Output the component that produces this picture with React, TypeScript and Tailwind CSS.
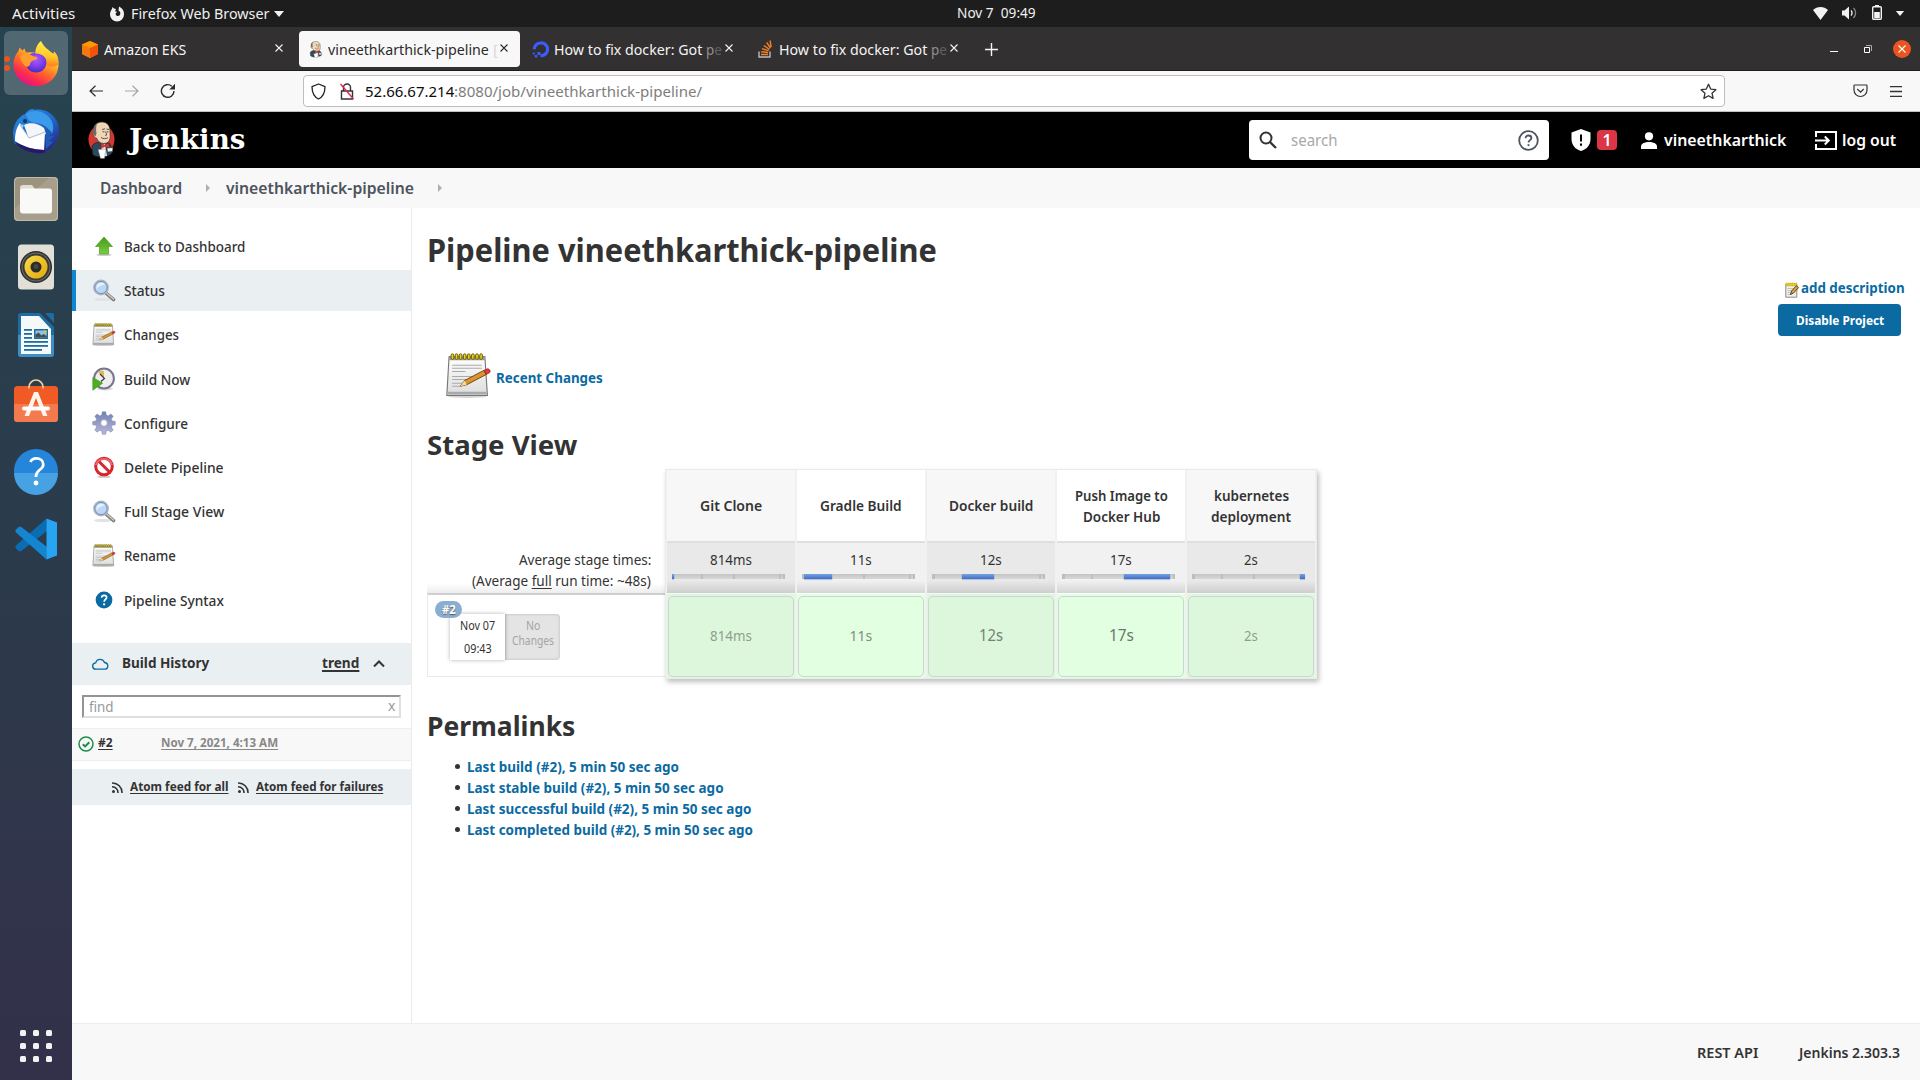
import React, { useLayoutEffect, useRef, useState } from "react";

type FitProps = { className?: string; children: React.ReactNode };

/** One line of text, condensed or widened to fill the width of its box. */
function Fit({ className = "", children }: FitProps) {
  const outer = useRef<HTMLSpanElement>(null);
  const inner = useRef<HTMLSpanElement>(null);
  const [scale, setScale] = useState(1);
  useLayoutEffect(() => {
    if (outer.current && inner.current) {
      const natural = inner.current.offsetWidth;
      if (natural > 0) setScale(outer.current.clientWidth / natural);
    }
  }, []);
  return (
    <span ref={outer} className={"inline-block shrink-0 whitespace-pre text-left " + className}>
      <span
        ref={inner}
        className="inline-block origin-left [text-decoration:inherit] [text-underline-offset:inherit]"
        style={{ transform: `scaleX(${scale})` }}
      >
        {children}
      </span>
    </span>
  );
}

/* ---------- dock icons ---------- */

function FirefoxIcon() {
  return (
    <svg className="h-12 w-12" viewBox="0 0 48 48">
      <defs>
        <linearGradient id="ffa" x1="0.85" y1="0.05" x2="0.25" y2="0.95">
          <stop offset="0" stopColor="#fff44f" />
          <stop offset="0.3" stopColor="#ffb22c" />
          <stop offset="0.55" stopColor="#ff6a2a" />
          <stop offset="0.8" stopColor="#fb2a50" />
          <stop offset="1" stopColor="#e31587" />
        </linearGradient>
        <radialGradient id="ffb" cx="0.5" cy="0.35" r="0.65">
          <stop offset="0" stopColor="#a95bff" />
          <stop offset="0.6" stopColor="#7a3bea" />
          <stop offset="1" stopColor="#4a2cba" />
        </radialGradient>
        <linearGradient id="ffc" x1="0.7" y1="0" x2="0.6" y2="1">
          <stop offset="0" stopColor="#fff44f" />
          <stop offset="0.6" stopColor="#ffc72b" />
          <stop offset="1" stopColor="#ff7a1f" />
        </linearGradient>
      </defs>
      <path
        d="M24 47C11 47 1.500 37.500 1.500 25.500 1.500 19 4 15 6.500 12L7.500 8.500 10.500 11.500 12.500 9.500 14 13.500C18 13 22 13 27 14L44 15C46 19 46.500 22 46.500 25.500 46.500 37.500 37 47 24 47Z"
        fill="url(#ffa)"
      />
      <path d="M24.500 13.500c5 0 10 4 10 9.500s-4 10.500-10.500 10.500S14 29 14 23.500s4-10 10.500-10z" fill="url(#ffb)" />
      <path
        d="M29 2c-4 3.500-6 8-5.500 12.500 8 0 12 5 11.500 12 5 2 11 1 11.300-2C47 19 44.500 14.500 42 12.500l-.7 2.500C37 11 32 8.500 29 2z"
        fill="url(#ffc)"
      />
      <path
        d="M7.500 17c4-3 9-2.500 12.500-.5 2 1.200 5.500 1 5.500 2.500 0 1.800-5 2-6.500 4-1.500 2.200-.5 3.500-3 4.500-3 1-6.500-4-8.500-10.500z"
        fill="#ff9e2c"
      />
    </svg>
  );
}

function ThunderbirdIcon() {
  return (
    <svg className="mt-[2px] h-12 w-12" viewBox="0 0 48 48">
      <defs>
        <linearGradient id="tba" x1="0.2" y1="0" x2="0.8" y2="1">
          <stop offset="0" stopColor="#2a8be0" />
          <stop offset="0.5" stopColor="#1f62c4" />
          <stop offset="1" stopColor="#2a1a78" />
        </linearGradient>
      </defs>
      <path
        d="M3 36C-2 24 3 10 13 6 16 1 22 0 22 2c10-2 20 3 24 14 3 10-1 20-8 25l-3 1-2 4-1-2-6 4 2-4-8 0-3-4-3 2-3-5-3 0z"
        fill="url(#tba)"
      />
      <path d="M14 6c5-5 17-4 23 3 5 6 5 12 3 17-3-6-8-10-16-11-5 0-9-3-10-9z" fill="#3a9bea" />
      <path d="M8 15l3 6 6 8 16-5-1 18C22 42 10 38 3 33 3 26 4 20 8 15z" fill="#fff" />
      <path d="M12 17c6-3 14-2 20 3l2 6-17 5z" fill="#f3f5f9" />
      <path d="M8 17l9 13 16-6" fill="none" stroke="#b7bcc6" strokeWidth="1" />
      <path d="M3 34c8 5 20 8 30 8l-1 3C20 46 8 42 3 34z" fill="#2a1668" />
      <circle cx="13" cy="13" r="2" fill="#123a66" />
      <path d="M8 16l4 1-2 4z" fill="#8fd0f5" />
      <path d="M34 22l6 2-3 4 5 0-5 5 4 1-7 7z" fill="#1e5cb8" />
    </svg>
  );
}

function FilesIcon() {
  return (
    <svg className="h-12 w-12" viewBox="0 0 48 48">
      <rect x="2" y="2" width="44" height="44" rx="4" fill="#9c937f" />
      <path d="M2 34L38 2h4a4 4 0 014 4v36a4 4 0 01-4 4H6a4 4 0 01-4-4z" fill="#a79f8b" />
      <rect x="2.500" y="2.500" width="43" height="43" rx="4" fill="none" stroke="#c3bba8" />
      <path d="M8 13a3 3 0 013-3h9l3 4h4v8H8z" fill="#e2ddcf" />
      <rect x="8" y="13.500" width="32" height="25" rx="3" fill="#f9f9f7" />
    </svg>
  );
}

function RhythmboxIcon() {
  return (
    <svg className="h-12 w-12" viewBox="0 0 48 48">
      <defs>
        <linearGradient id="rba" x1="0" y1="0" x2="1" y2="1">
          <stop offset="0" stopColor="#f9da4c" />
          <stop offset="1" stopColor="#e2a90a" />
        </linearGradient>
      </defs>
      <rect x="6" y="1.500" width="36" height="45" rx="3.500" fill="#e2dfd6" />
      <circle cx="24" cy="24" r="16" fill="#2c2f33" />
      <circle cx="24" cy="24" r="14.500" fill="#6b6b68" />
      <circle cx="24" cy="24" r="13.500" fill="#3a3a36" />
      <circle cx="24" cy="24" r="11.500" fill="url(#rba)" />
      <circle cx="24" cy="24" r="5.500" fill="#2b2b28" />
      <circle cx="24" cy="23.500" r="2.500" fill="#454541" />
    </svg>
  );
}

function WriterIcon() {
  return (
    <svg className="h-12 w-12" viewBox="0 0 48 48">
      <path d="M6 5a3 3 0 013-3h19l14 14v27a3 3 0 01-3 3H9a3 3 0 01-3-3z" fill="#1d6da5" />
      <path d="M6 24h36v19a3 3 0 01-3 3H9a3 3 0 01-3-3z" fill="#3d8fc4" />
      <path d="M9 5h18l12 13v25H9z" fill="#f7f8f9" />
      <path d="M33 2h7a2 2 0 012 2v8z" fill="#1d6da5" />
      <g fill="#1f6ca3">
        <rect x="12" y="18" width="8" height="1.800" />
        <rect x="12" y="22" width="8" height="1.800" />
        <rect x="12" y="26" width="8" height="1.800" />
        <rect x="12" y="30" width="24" height="1.800" />
        <rect x="12" y="34" width="24" height="1.800" />
        <rect x="12" y="38" width="18" height="1.800" />
        <rect x="22" y="18" width="14" height="10" />
      </g>
      <rect x="23.500" y="19.500" width="11" height="7" fill="#8cc3e4" />
      <path d="M23.500 26.500v-3l3-2 3 3 2-1.500 3 2v1.500z" fill="#4b4b46" />
      <path d="M31 19.500h3.500v3.500z" fill="#f0c21f" />
    </svg>
  );
}

function SoftwareIcon() {
  return (
    <svg className="mb-[3px] h-12 w-12" viewBox="0 0 48 48">
      <rect x="2" y="8" width="44" height="36" rx="3.500" fill="#ef5a25" />
      <path d="M2 26h44v14.500a3.500 3.500 0 01-3.500 3.500h-37A3.500 3.500 0 012 40.500z" fill="#f37a4e" />
      <path d="M17 10.500V9a7 7 0 0114 0v1.500" fill="none" stroke="#f0cf9e" strokeWidth="1.700" />
      <path d="M22 14h4l9.500 24h-4.500L24 20l-7 18h-4.500z" fill="#fff3ec" />
      <rect x="10" y="28.500" width="28" height="4" rx="2" fill="#fff" />
    </svg>
  );
}

function HelpDockIcon() {
  return (
    <svg className="h-12 w-12" viewBox="0 0 48 48">
      <circle cx="24" cy="24" r="22" fill="#2585da" />
      <path d="M2 26a22 22 0 0044 0z" fill="#47a2e4" />
      <path d="M18.500 15c1-3 3.500-3.600 5.800-3.600 4 0 7 2.200 7 6 0 5.400-7.300 5.500-7.300 11.600v1" fill="none" stroke="#fff" strokeWidth="2.700" />
      <circle cx="24" cy="36" r="2.400" fill="#fff" />
    </svg>
  );
}

function CodeIcon() {
  return (
    <svg className="h-12 w-12" viewBox="0 0 48 48">
      <path d="M34.500 3.500L3.500 31v2l3.500 3.300h2L35 16z" fill="#0a6db4" />
      <path d="M34.500 44.500L3.500 17v-2L7 11.700h2L35 32z" fill="#1485d0" />
      <path d="M34.500 3.500L45 7.500v33L34.500 44.500z" fill="#28a5f2" />
    </svg>
  );
}

function Dock() {
  const icons = [
    <FirefoxIcon />,
    <ThunderbirdIcon />,
    <FilesIcon />,
    <RhythmboxIcon />,
    <WriterIcon />,
    <SoftwareIcon />,
    <HelpDockIcon />,
    <CodeIcon />,
  ];
  return (
    <aside className="flex w-[72px] shrink-0 flex-col items-center bg-linear-to-b from-[#264350] via-[#2b3b4b] to-[#33304a] pt-[2px]">
      {icons.map((icon, i) => (
        <div key={i} className="relative flex h-[68px] w-full items-center justify-center">
          {i === 0 && (
            <>
              <span className="absolute inset-x-1 inset-y-[2px] rounded-md bg-white/20" />
              <span className="absolute top-[27px] left-[4px] h-[6px] w-[6px] rounded-full bg-[#e95420]" />
              <span className="absolute top-[36px] left-[4px] h-[6px] w-[6px] rounded-full bg-[#e95420]" />
            </>
          )}
          <span className="relative">{icon}</span>
        </div>
      ))}
      <div className="mt-auto mb-[18px] grid grid-cols-3 gap-[7px]">
        {Array.from({ length: 9 }, (_, i) => (
          <span key={i} className="h-[6px] w-[6px] rounded-[1.500px] bg-[#f2f2f2]" />
        ))}
      </div>
    </aside>
  );
}

/* ---------- shared drawings ---------- */

function Butler({ className, ring }: { className: string; ring?: boolean }) {
  return (
    <svg className={className} viewBox="0 0 27 38" preserveAspectRatio="none">
      {ring && <ellipse cx="13.500" cy="18.500" rx="13" ry="14.500" fill="#d33833" />}
      <path d="M4 25c2-3 5-4 8-3.500l9 .5c2 2 3 5 3.500 9-1 3-6 5-11 5-4 0-8-1-9-3z" fill="#2c4a5e" stroke="#1a1a1a" strokeWidth="0.600" />
      <path d="M13 22l4 1 2 12-5 .5z" fill="#f2f2f2" />
      <path
        d="M5.500 11C5 4.500 9 .8 14 1c5 0 8 3.500 8 9 0 3 .5 4.500 0 7.500-.5 3.500-3 5-6 5-4 0-6-2-7.500-5.500C6.500 17 4.500 14.500 5.500 11z"
        fill="#f0d6b7"
        stroke="#3a2f26"
        strokeWidth="0.700"
      />
      <path d="M5.500 12C4.800 7 6.500 4 9 2.500 7.800 6 8 9 8.500 12.500l-1 3c-1-.5-2-2-2-3.500z" fill="#6d6b6d" />
      <path d="M14 8.500l3-.7M18.500 8l2.500.5M14.500 10.800h2M18.700 10.800h1.800M17.700 10.500l1 3.500-1.500.5M13 16.500c2 1.500 5 1.300 7 .3" fill="none" stroke="#3a2f26" strokeWidth="0.800" />
      <path d="M13 22l3.500 2 4.500-2 .3 5-4.500-1.500-4 2z" fill="#d33833" stroke="#7a1512" strokeWidth="0.400" />
      <path d="M10 28.500l8-.5-1.500 9.500h-4z" fill="#fff" stroke="#555" strokeWidth="0.400" />
      <path d="M19 27l6-.5-.5 4-5 .5z" fill="#f0f0f0" stroke="#222" strokeWidth="0.500" />
    </svg>
  );
}

function Notepad({ className }: { className: string }) {
  return (
    <svg className={className} viewBox="0 0 44 44">
      <defs>
        <linearGradient id="npa" x1="0" y1="0" x2="0" y2="1">
          <stop offset="0" stopColor="#fff" />
          <stop offset="1" stopColor="#dcdcdc" />
        </linearGradient>
      </defs>
      <ellipse cx="21" cy="42.500" rx="19" ry="1.500" fill="#bbb" opacity="0.600" />
      <path d="M3 3.500h35l2.500 38H.8z" fill="url(#npa)" stroke="#777" strokeWidth="1.100" />
      <path d="M2 38h37.500v2.500H2z" fill="#a8aaa8" />
      <path d="M3 3.500h35v3.500H3z" fill="#9a9a96" />
      {[5, 9, 13, 17, 21, 25, 29, 33].map((x) => (
        <rect key={x} x={x} y="0.800" width="2.600" height="5.400" rx="1.200" fill="#e9d21e" stroke="#6a5b08" strokeWidth="0.900" />
      ))}
      <path d="M6 12h29M6 15h29M6 18h13M6 23h21M6 26h19M6 29.500h13M6 32.500h8" stroke="#aaa" strokeWidth="1" />
      <path d="M14 32.500l4-5.500 19-10 2.300 4-19 10z" fill="#d9952f" stroke="#6a4208" strokeWidth="0.900" />
      <path d="M14 32.500l4-5.500 2.300 4z" fill="#f0d9a8" />
      <path d="M37 17l3.500-1.500c2.200 0 3.500 2.300 2 3.800L39.300 21z" fill="#e23a36" stroke="#8d1a17" strokeWidth="0.700" />
    </svg>
  );
}

function SmallNotepad() {
  return (
    <svg className="mt-[6px] h-[16px] w-[14px]" viewBox="0 0 14 16">
      <path d="M.8 2.500h11v12.700H.8z" fill="#efefef" stroke="#8a8a86" strokeWidth="1" />
      <path d="M.8 1h11v3H.8z" fill="#e8c81e" stroke="#9a8412" strokeWidth="0.500" strokeDasharray="1 1" />
      <path d="M2.500 6.500h6M2.500 8.500h4M2.500 10.500h3M2.500 12.500h4" stroke="#b5b5b5" strokeWidth="0.800" />
      <path d="M5.500 12.500l1-3.500 5-5.300 2 1.900-5 5.400z" fill="#d9a243" stroke="#4a3208" strokeWidth="0.900" />
    </svg>
  );
}

function Lens() {
  return (
    <svg className="h-6 w-6" viewBox="0 0 24 24">
      <ellipse cx="11" cy="20.500" rx="9" ry="1.600" fill="#e2e2e2" />
      <path d="M14.500 14.500l7 6" stroke="#7b7b7b" strokeWidth="3.600" strokeLinecap="round" />
      <path d="M15 14.500l6.500 5.500" stroke="#c8c8c8" strokeWidth="1.600" strokeLinecap="round" />
      <circle cx="9" cy="8.500" r="7" fill="#bcd6f3" stroke="#b4b6b8" strokeWidth="1.800" />
      <circle cx="9" cy="8.500" r="6.100" fill="none" stroke="#5f8fcb" strokeWidth="0.900" />
      <path d="M4.500 8.500a5 5 0 015-4.800c2 0 3 1 3.500 2C9.500 5.500 6.500 7.500 4.500 10.500z" fill="#e8f2fc" />
    </svg>
  );
}

function UpArrow() {
  return (
    <svg className="h-6 w-6" viewBox="0 0 24 24">
      <defs>
        <linearGradient id="upa" x1="0" y1="0" x2="0" y2="1">
          <stop offset="0" stopColor="#4f9a22" />
          <stop offset="0.500" stopColor="#5cb329" />
          <stop offset="1" stopColor="#7ad03a" />
        </linearGradient>
      </defs>
      <ellipse cx="12" cy="19.800" rx="8" ry="1.300" fill="#ccc" />
      <path d="M12 2l8.500 9.500h-4V19h-9v-7.500h-4z" fill="url(#upa)" stroke="#3f8f17" strokeWidth="0.600" />
    </svg>
  );
}

function BuildClock() {
  return (
    <svg className="h-6 w-6" viewBox="0 0 24 24">
      <ellipse cx="13" cy="22" rx="8" ry="1.500" fill="#ddd" />
      <circle cx="12" cy="11.500" r="9.900" fill="#eeeeec" stroke="#77758f" strokeWidth="2" />
      <path d="M6 5l6 6.500V4A8 8 0 006 5z" fill="#d8bd55" />
      <path d="M8 7l4.500 4.500-3.500 3" fill="none" stroke="#333" strokeWidth="1.100" />
      <path d="M.8 10.500v12.700l9.800-7z" fill="#4caf22" stroke="#3c8f18" strokeWidth="0.600" />
    </svg>
  );
}

function GearIcon() {
  return (
    <svg className="h-6 w-6" viewBox="0 0 24 24">
      <defs>
        <linearGradient id="gra" x1="0" y1="0" x2="0" y2="1">
          <stop offset="0" stopColor="#6d84b4" />
          <stop offset="1" stopColor="#b9b6d8" />
        </linearGradient>
      </defs>
      <g fill="url(#gra)" stroke="#7d83a8" strokeWidth="0.500">
        <path d="M10.300.8h3.400l.6 3.300 1.800.8 2.800-1.900 2.300 2.300-1.900 2.800.8 1.800 3.200.6v3.200l-3.200.6-.8 1.800 1.900 2.800-2.300 2.300-2.800-1.900-1.800.8-.6 3.200h-3.400l-.6-3.200-1.800-.8-2.800 1.900-2.300-2.300 1.900-2.800-.8-1.800-3.200-.6v-3.200l3.200-.6.8-1.800-1.900-2.800 2.300-2.300 2.800 1.900 1.800-.8z" />
      </g>
      <circle cx="12" cy="12" r="3.400" fill="#fff" stroke="#8f94b8" strokeWidth="0.800" />
    </svg>
  );
}

function NoEntry() {
  return (
    <svg className="h-6 w-6" viewBox="0 0 24 24">
      <ellipse cx="12" cy="21.800" rx="7" ry="1.200" fill="#ccc" />
      <circle cx="12" cy="11.500" r="8.300" fill="#fff" stroke="#d8262c" strokeWidth="3" />
      <path d="M6.500 6l11 11" stroke="#d8262c" strokeWidth="3" />
      <path d="M4 10a8.300 8.300 0 0116 0" fill="none" stroke="#e8696c" strokeWidth="2" />
    </svg>
  );
}

function SyntaxHelp() {
  return (
    <svg className="h-6 w-6" viewBox="0 0 24 24">
      <circle cx="12" cy="12" r="8.400" fill="#0b6aa2" />
      <path d="M9.500 9.600c.2-1.600 1.300-2.300 2.600-2.300 1.500 0 2.500.9 2.500 2.200 0 2-2.500 2-2.500 4.200" fill="none" stroke="#fff" strokeWidth="1.700" />
      <circle cx="12.100" cy="16.300" r="1.100" fill="#fff" />
    </svg>
  );
}

function Caret({ className }: { className: string }) {
  return (
    <svg className={className} viewBox="0 0 10 6">
      <path d="M0 0h10L5 6z" fill="#f2f2f2" />
    </svg>
  );
}

/* ---------- desktop chrome ---------- */

function TopBar() {
  return (
    <header className="flex h-[27px] shrink-0 items-center bg-[#1d1d1d] text-[14px] leading-[27px] text-[#f0f0f0]">
      <Fit className="ml-[12px] w-[63px]">Activities</Fit>
      <svg className="ml-[34px] h-[16px] w-[16px]" viewBox="0 0 16 16">
        <path
          d="M8 15.500a7 7 0 01-7-7C1 6 2 4 3 3l.5-2L5 2.500 7 3l-1 2.200 2 .5-1.500 2C7 10 9 10.500 10.500 9.500 12 8 11.500 5.500 9.500 4.500L10 .5C13.500 2 15.200 5 15 8.500a7 7 0 01-7 7z"
          fill="#f2f2f2"
        />
      </svg>
      <Fit className="ml-[6px] w-[138px]">Firefox Web Browser</Fit>
      <Caret className="ml-[5px] h-[6px] w-[10px]" />
      <Fit className="mb-[3px] ml-[673px] w-[79px]">Nov 7  09:49</Fit>
      <div className="mr-[15px] ml-auto flex items-center">
        <svg className="mb-px h-[13px] w-[15px]" viewBox="0 0 15 13">
          <path d="M0 3C4-1 11-1 15 3L7.500 13z" fill="#f2f2f2" />
        </svg>
        <svg className="mb-px ml-[14px] h-[14px] w-[15px]" viewBox="0 0 15 14">
          <path d="M0 4.500h2.500L7 .5v13L2.500 9.500H0z" fill="#f2f2f2" />
          <path d="M9 4.500a3.500 3.500 0 010 5" fill="none" stroke="#f2f2f2" strokeWidth="1.300" />
          <path d="M11.500 2a7 7 0 010 10" fill="none" stroke="#888" strokeWidth="1.300" />
        </svg>
        <svg className="mb-[2px] ml-[15px] h-[15px] w-[10px]" viewBox="0 0 10 15">
          <path d="M3 0h4v1.500H3z" fill="#f2f2f2" />
          <rect x="0.700" y="1.700" width="8.600" height="12.600" rx="1" fill="none" stroke="#f2f2f2" strokeWidth="1.400" />
          <rect x="2.200" y="7" width="5.600" height="6" fill="#f2f2f2" />
        </svg>
        <Caret className="ml-[13px] h-[5px] w-[10px]" />
      </div>
    </header>
  );
}

function Cross({ className = "" }: { className?: string }) {
  return (
    <svg className={"mb-[2px] h-[8px] w-[8px] shrink-0 " + className} viewBox="0 0 8 8">
      <path d="M.5.5l7 7M7.500.5l-7 7" stroke="currentColor" strokeWidth="1.100" />
    </svg>
  );
}

function FadedTail() {
  return (
    <Fit className="ml-[4px] w-[16px]">
      <span className="text-[#918f90]">p</span>
      <span className="text-[#636061]">e</span>
    </Fit>
  );
}

function TabStrip() {
  return (
    <div className="flex h-[44px] items-center border-b border-[#1f1c1d] bg-[#333031] pt-px text-[15px] leading-[24px] text-[#f4f4f4]">
      <div className="flex w-[227px] items-center pl-[10px]">
        <svg className="h-[17px] w-[16px]" viewBox="0 0 16 17">
          <path d="M8 0l8 3.500v9.500L8 17l-8-4V3.500z" fill="#f58534" />
          <path d="M8 0l8 3.500L8 7 0 3.500z" fill="#ff9900" />
          <path d="M8 7l8-3.500V13L8 17z" fill="#f0540c" />
          <path d="M8 7L0 3.500V13l8 4z" fill="#f6790f" />
        </svg>
        <Fit className="ml-[6px] w-[82px]">Amazon EKS</Fit>
        <Cross className="ml-[89px]" />
      </div>
      <div className="flex h-[36px] w-[221px] items-center rounded bg-[#f8f8f8] pl-[9px] text-[#2d2a2b]">
        <Butler className="h-[17px] w-[15px]" />
        <Fit className="ml-[5px] w-[161px]">vineethkarthick-pipeline</Fit>
        <span className="w-[11px] pl-[4px] text-[#d8d8d8]">[</span>
        <Cross />
      </div>
      <div className="flex w-[226px] items-center pl-[12px]">
        <svg className="h-[17px] w-[17px]" viewBox="0 0 17 17">
          <path d="M8.500 14.500A6.300 6.300 0 108.500 2a6.300 6.300 0 00-6.300 6.300" fill="none" stroke="#3c5cff" strokeWidth="3.200" />
          <path d="M5.500 11h3v3h-3zM2.800 14h2.600v2.600H2.800zM.8 11.500h2v2h-2z" fill="#3c5cff" />
        </svg>
        <Fit className="ml-[5px] w-[148px]">How to fix docker: Got</Fit>
        <FadedTail />
        <Cross className="ml-[3px]" />
      </div>
      <div className="flex w-[224px] items-center pl-[12px]">
        <svg className="h-[18px] w-[14px]" viewBox="0 0 14 18">
          <path d="M1 11.500v5.500h11v-5.500" fill="none" stroke="#bcbbbb" strokeWidth="1.400" />
          <path d="M3 14.500h7M3.200 11.700l6.900.8M4 8.700l6.600 2M5.800 5.500l5.700 3.800M8.700 2.500l3.800 5.500M12 .5l1.200 6.500" fill="none" stroke="#f48024" strokeWidth="1.400" />
        </svg>
        <Fit className="ml-[7px] w-[148px]">How to fix docker: Got</Fit>
        <FadedTail />
        <Cross className="ml-[3px]" />
      </div>
      <svg className="ml-[15px] h-[13px] w-[13px]" viewBox="0 0 13 13">
        <path d="M6.500 0v13M0 6.500h13" stroke="#f4f4f4" strokeWidth="1.400" />
      </svg>
      <div className="mr-[9px] ml-auto flex items-center">
        <span className="mt-[4px] h-px w-[8px] bg-white" />
        <svg className="ml-[26px] h-[8px] w-[8px]" viewBox="0 0 8 8">
          <path d="M.5 2.500h5v5h-5z" fill="none" stroke="#fff" />
          <path d="M2 .5h5.500V6" fill="none" stroke="#aaa" />
        </svg>
        <span className="ml-[21px] flex h-[18px] w-[18px] items-center justify-center rounded-full bg-[#e95420] pt-[2px] text-white">
          <Cross />
        </span>
      </div>
    </div>
  );
}

function NavBar() {
  return (
    <div className="flex h-[41px] items-center border-b border-[#bfbfbf] bg-[#f8f8f8]">
      <svg className="ml-[17px] h-[12px] w-[14px]" viewBox="0 0 14 12" fill="none" stroke="#2b2b2b" strokeWidth="1.200">
        <path d="M14 6H1M6.500.7L1 6l5.500 5.300" />
      </svg>
      <svg className="ml-[22px] h-[12px] w-[14px]" viewBox="0 0 14 12" fill="none" stroke="#a5a5a5" strokeWidth="1.200">
        <path d="M0 6h13M7.500.7L13 6l-5.500 5.300" />
      </svg>
      <svg className="ml-[21px] h-[16px] w-[16px]" viewBox="0 0 16 16">
        <path d="M14 8a6.300 6.300 0 11-2.200-4.800" fill="none" stroke="#2b2b2b" strokeWidth="1.400" />
        <path d="M15 .8V6.500H9.300z" fill="#2b2b2b" />
      </svg>
      <div className="ml-[127px] flex h-[32px] w-[1422px] items-center rounded border border-[#bdbdbd] bg-white">
        <svg className="ml-[7px] h-[17px] w-[15px]" viewBox="0 0 15 17" fill="none" stroke="#222" strokeWidth="1.300">
          <path d="M7.500 1L14 3.600C14 10 12 14 7.500 16 3 14 1 10 1 3.600z" strokeLinejoin="round" />
        </svg>
        <svg className="ml-[14px] h-[17px] w-[14px]" viewBox="0 0 14 17" fill="none">
          <path d="M1.500 8h11v8h-11zM3.500 8V4.500a3.500 3.500 0 017 0V8" stroke="#333" strokeWidth="1.400" />
          <path d="M.5 1l13 15" stroke="#e22850" strokeWidth="1.500" />
        </svg>
        <div className="ml-[11px] text-[15px] leading-[24px]">
          <Fit className="w-[89px] text-[#0c0c0d]">52.66.67.214</Fit>
          <Fit className="w-[248px] text-[#7d7d7d]">:8080/job/vineethkarthick-pipeline/</Fit>
        </div>
        <svg className="mr-[7px] ml-auto h-[17px] w-[17px]" viewBox="0 0 17 17" fill="none" stroke="#333" strokeWidth="1.300">
          <path d="M8.500 1.300l2.200 4.800 5.200.6-3.900 3.500 1.100 5.200-4.600-2.600-4.600 2.600L5 10.200 1.100 6.700l5.200-.6z" strokeLinejoin="round" />
        </svg>
      </div>
      <svg className="mr-[22px] ml-auto h-[14px] w-[15px]" viewBox="0 0 15 14" fill="none" stroke="#333" strokeWidth="1.200">
        <path d="M1.700 1h11.600c.5 0 .7.300.7.700V6a6.500 6.500 0 01-13 0V1.700c0-.4.200-.7.700-.7zM4.300 5l3.200 3.200L10.700 5" />
      </svg>
      <svg className="mr-[18px] h-[11px] w-[12px]" viewBox="0 0 12 11">
        <path d="M0 .7h12M0 5.500h12M0 10.300h12" stroke="#333" strokeWidth="1.300" />
      </svg>
    </div>
  );
}

/* ---------- Jenkins ---------- */

function JenkinsHeader() {
  return (
    <div className="flex h-[56px] items-center bg-black text-[16px] font-semibold text-white">
      <Butler ring className="ml-[16px] h-[38px] w-[27px]" />
      <Fit className="mb-px ml-[14px] w-[116px] font-['DejaVu_Serif',serif] text-[27px] leading-[36px] font-bold">Jenkins</Fit>
      <div className="ml-auto flex h-[40px] w-[300px] items-center rounded bg-white">
        <svg className="mb-px ml-[10px] h-[18px] w-[18px]" viewBox="0 0 18 18" fill="none" stroke="#333">
          <circle cx="7" cy="7" r="5.500" strokeWidth="2" />
          <path d="M11 11l6 6" strokeWidth="2.300" />
        </svg>
        <Fit className="ml-[14px] w-[47px] font-normal text-[#a9a9a9]">search</Fit>
        <svg className="mr-[10px] ml-auto h-[21px] w-[21px]" viewBox="0 0 21 21" fill="none" stroke="#4d545d" strokeWidth="1.800">
          <circle cx="10.500" cy="10.500" r="9.300" />
          <path d="M7.600 8.300c0-1.900 1.300-2.800 2.900-2.800s2.900 1 2.900 2.500c0 2-2.900 2.200-2.900 4.400" />
          <path d="M10.500 14.200v1.900" />
        </svg>
      </div>
      <svg className="ml-[22px] h-[22px] w-[20px]" viewBox="0 0 20 22">
        <path d="M10 0l9.500 3.500V10c0 6-4 10.500-9.500 12C4.500 20.500.5 16 .5 10V3.500z" fill="#fff" />
        <path d="M10 5.500v7M10 14.500v2.200" stroke="#000" strokeWidth="2" />
      </svg>
      <span className="ml-[6px] flex h-[20px] w-[20px] items-center justify-center rounded bg-[#dc3545] text-[16px] leading-[20px]">1</span>
      <svg className="ml-[24px] h-[17px] w-[16px]" viewBox="0 0 16 17" fill="#fff">
        <circle cx="8" cy="4.300" r="4.100" />
        <path d="M0 17v-2.600C0 11.500 4 10 8 10s8 1.500 8 4.400V17z" />
      </svg>
      <Fit className="ml-[7px] w-[122px]">vineethkarthick</Fit>
      <svg className="ml-[29px] h-[19px] w-[22px]" viewBox="0 0 22 19" fill="none" stroke="#fff" strokeWidth="2">
        <path d="M1 6V1h20v17H1v-5" />
        <path d="M0 9.500h13M9.800 5.500l4 4-4 4" />
      </svg>
      <Fit className="mr-[24px] ml-[5px] w-[54px]">log out</Fit>
    </div>
  );
}

function CrumbArrow({ className }: { className: string }) {
  return (
    <svg className={className + " h-[8px] w-[4px]"} viewBox="0 0 4 8">
      <path d="M0 0l4 4-4 4z" fill="#aab0b6" />
    </svg>
  );
}

function Breadcrumbs() {
  return (
    <div className="flex h-[40px] items-center bg-[#f8f8f8] text-[16px] font-semibold text-[#4d545d]">
      <Fit className="ml-[28px] w-[82px]">Dashboard</Fit>
      <CrumbArrow className="ml-[24px]" />
      <Fit className="ml-[16px] w-[188px]">vineethkarthick-pipeline</Fit>
      <CrumbArrow className="ml-[24px]" />
    </div>
  );
}

const tasks = [
  { label: "Back to Dashboard", width: "w-[121px]", icon: <UpArrow /> },
  { label: "Status", width: "w-[41px]", icon: <Lens />, active: true },
  { label: "Changes", width: "w-[55px]", icon: <Notepad className="h-[23px] w-6" /> },
  { label: "Build Now", width: "w-[66px]", icon: <BuildClock /> },
  { label: "Configure", width: "w-[64px]", icon: <GearIcon /> },
  { label: "Delete Pipeline", width: "w-[100px]", icon: <NoEntry /> },
  { label: "Full Stage View", width: "w-[100px]", icon: <Lens /> },
  { label: "Rename", width: "w-[52px]", icon: <Notepad className="h-[23px] w-6" /> },
  { label: "Pipeline Syntax", width: "w-[100px]", icon: <SyntaxHelp /> },
];

function Rss({ className }: { className: string }) {
  return (
    <svg className={className + " h-[11px] w-[11px]"} viewBox="0 0 11 11" fill="none" stroke="#333" strokeWidth="1.600">
      <circle cx="1.500" cy="9.500" r="1.500" fill="#333" stroke="none" />
      <path d="M0 4.800A5.800 5.800 0 016 11M0 1a9.600 9.600 0 0110 10" />
    </svg>
  );
}

function SidePanel() {
  return (
    <div className="flex w-[340px] shrink-0 flex-col border-r border-[#eaebec] pt-[18px] text-[#333]">
      <nav className="flex flex-col gap-[3.200px]">
        {tasks.map((t) => (
          <div
            key={t.label}
            className={
              "flex h-[41px] items-center border-l-4 pl-4 text-[14px] font-medium " +
              (t.active ? "border-[#0b87d4] bg-[#eaeff2]" : "border-transparent")
            }
          >
            {t.icon}
            <Fit className={"ml-2 " + t.width}>{t.label}</Fit>
          </div>
        ))}
      </nav>
      <div className="mt-[22px] flex h-[42px] items-center bg-[#eaeff2] pl-[20px] text-[14px] font-bold">
        <svg className="mt-px h-[12px] w-[17px]" viewBox="0 0 17 12">
          <path d="M4 11.200a3.200 3.200 0 01-.3-6.400A4.600 4.600 0 0112.500 4.500a3.400 3.400 0 01.7 6.700z" fill="none" stroke="#0b6aa2" strokeWidth="1.300" />
        </svg>
        <Fit className="mb-[3px] ml-[13px] w-[87px]">Build History</Fit>
        <Fit className="mb-[3px] ml-[113px] w-[37px] underline decoration-2 underline-offset-2">trend</Fit>
        <svg className="ml-[14px] h-[7px] w-[12px]" viewBox="0 0 12 7">
          <path d="M1 6.500l5-5 5 5" fill="none" stroke="#333" strokeWidth="2" />
        </svg>
      </div>
      <div className="mt-[10px] ml-[10px] flex h-[23px] w-[319px] items-center justify-between border-2 border-t-[#949494] border-r-[#dfdfdf] border-b-[#dfdfdf] border-l-[#949494] pr-[4px] pl-[5px] text-[15px] leading-[18px] text-[#999]">
        <Fit className="w-[25px]">find</Fit>
        <Fit className="w-[7px] text-[14px]">x</Fit>
      </div>
      <div className="mt-[10px] flex h-[33px] items-center border-y border-[#eaeff2] bg-[#f8f8f8] pl-[6px] text-[12px] font-bold">
        <svg className="mb-px h-[16px] w-[16px]" viewBox="0 0 16 16" fill="none" stroke="#1c8d4b">
          <circle cx="8" cy="8" r="7" strokeWidth="1.500" />
          <path d="M4.800 8.200l2.300 2.200 4.200-4.200" strokeWidth="2" />
        </svg>
        <Fit className="mb-[2px] ml-[4px] w-[15px] underline underline-offset-2">#2</Fit>
        <Fit className="mb-[2px] ml-[48px] w-[117px] text-[#888] underline underline-offset-2">Nov 7, 2021, 4:13 AM</Fit>
      </div>
      <div className="mt-[8px] flex h-[36px] items-center bg-[#eaeff2] text-[12px] font-bold">
        <Rss className="mt-[2px] ml-[40px]" />
        <Fit className="mt-px ml-[7px] w-[98px] underline underline-offset-2">Atom feed for all</Fit>
        <Rss className="mt-[2px] ml-[10px]" />
        <Fit className="mt-px ml-[7px] w-[127px] underline underline-offset-2">Atom feed for failures</Fit>
      </div>
    </div>
  );
}

const stages = [
  { title: [["Git Clone", "w-[62px]"]], avg: "814ms", avgW: "w-[42px]", run: "814ms", runC: "w-[42px] text-[14px] text-[#8da08d]", seg: "left-0 w-[2px]" },
  { title: [["Gradle Build", "w-[82px]"]], avg: "11s", avgW: "w-[22px]", run: "11s", runC: "w-[23px] text-[14px] text-[#7f8e7f]", seg: "left-[2px] w-[28px]" },
  { title: [["Docker build", "w-[84px]"]], avg: "12s", avgW: "w-[22px]", run: "12s", runC: "mb-px w-[24px] text-[16px] text-[#748274]", seg: "left-[30px] w-[32px]" },
  { title: [["Push Image to", "w-[93px]"], ["Docker Hub", "w-[77px]"]], avg: "17s", avgW: "w-[22px]", run: "17s", runC: "mb-px w-[25px] text-[16px] text-[#6b786b]", seg: "left-[62px] w-[46px]" },
  { title: [["kubernetes", "w-[75px]"], ["deployment", "w-[80px]"]], avg: "2s", avgW: "w-[14px]", run: "2s", runC: "w-[14px] text-[14px] text-[#8da08d]", seg: "left-[108px] w-[5px]" },
];

function StageView() {
  return (
    <div className="flex h-[210px] text-[14px] leading-[21px]">
      <div className="flex w-[238px] flex-col">
        <div className="flex h-[124px] flex-col items-end justify-end bg-linear-to-t from-[#ededed] via-white via-[8%] to-white pr-[14px] pb-[2px]">
          <Fit className="w-[132px]">Average stage times:</Fit>
          <Fit className="w-[179px]">
            (Average <span className="underline underline-offset-2">full</span> run time: ~48s)
          </Fit>
        </div>
        <div className="h-[84px] border border-t-2 border-r-0 border-[#e8eaeb] border-t-[#cfcfcf]">
          <div className="relative flex pt-[19px] pl-[22px] text-[12px]">
            <span className="absolute top-[6px] left-[7px] z-10 flex h-[17px] w-[27px] items-center justify-center rounded-full bg-[#8aaed2] text-[12px] leading-[17px] font-bold text-white">
              <Fit className="w-[14px] [text-shadow:0_1px_1px_#555]">#2</Fit>
            </span>
            <div className="relative flex h-[46px] w-[55px] flex-col items-center bg-white pt-px shadow-[0_0_4px_rgba(0,0,0,0.3)]">
              <Fit className="w-[35px]">Nov 07</Fit>
              <Fit className="mt-[2px] w-[28px]">09:43</Fit>
            </div>
            <div className="flex h-[46px] w-[55px] flex-col items-center rounded-r bg-[#e4e4e4] pt-[4px] leading-[15px] text-[#a5a5a5] shadow-[inset_0_0_3px_rgba(0,0,0,0.2)]">
              <Fit className="w-[14px]">No</Fit>
              <Fit className="w-[42px]">Changes</Fit>
            </div>
          </div>
        </div>
      </div>
      <div className="flex h-[210px] w-[652px] border border-[#e9ecec] bg-[#f1f1f1] pl-px shadow-[2px_3px_5px_rgba(0,0,0,0.25)]">
        {stages.map((s, i) => {
          const odd = i % 2 === 0;
          return (
            <div
              key={i}
              className={
                "flex shrink-0 flex-col border-[#f1f1f1] " +
                (i === 4 ? "w-[129px] border-r " : "w-[130px] border-r-2 ") +
                (odd ? "bg-[#f7f7f7]" : "bg-white")
              }
            >
              <div className="flex h-[71px] flex-col items-center justify-center font-semibold text-[#333]">
                {s.title.map(([line, w]) => (
                  <Fit key={line} className={w}>
                    {line}
                  </Fit>
                ))}
              </div>
              <div
                className={
                  "flex h-[52px] flex-col items-center border-t-2 border-[#dfdfdf] bg-linear-to-t pt-[6px] " +
                  (odd ? "from-[#cecece] via-[#e9e9e9] via-[25%] to-[#e9e9e9]" : "from-[#d5d5d5] via-[#f1f1f1] via-[25%] to-[#f1f1f1]")
                }
              >
                <Fit className={"text-[#333] " + s.avgW}>{s.avg}</Fit>
                <div className="relative mt-[4px] mr-[5px] flex h-[5px] w-[113px] bg-linear-to-b from-[#c4c4c4] to-[#d8d8d8]">
                  <span className="h-full w-[3px] bg-[#bdbdbd]" />
                  <span className="ml-[26px] h-full w-[2px] bg-[#bfbfbf]" />
                  <span className="ml-[30px] h-full w-[2px] bg-[#bfbfbf]" />
                  <span className="ml-[44px] h-full w-[2px] bg-[#bfbfbf]" />
                  <span className="ml-[2px] h-full w-[2px] bg-[#bdbdbd]" />
                  <span className={"absolute inset-y-0 bg-linear-to-b from-[#76a2e0] to-[#3f6fc4] shadow-[0_1px_1px_#b4c4e0] " + s.seg} />
                </div>
              </div>
              <div className={"mt-px h-[84px] px-px pt-[2px] " + (odd ? "bg-[#ddf7dc]" : "bg-[#e3ffe2]")}>
                <div className="flex h-[81px] items-center justify-center rounded-[5px] border border-[#cbd6d2] pb-[2px]">
                  <Fit className={s.runC}>{s.run}</Fit>
                </div>
              </div>
            </div>
          );
        })}
      </div>
    </div>
  );
}

const links = [
  ["Last build (#2), 5 min 50 sec ago", "w-[212px]"],
  ["Last stable build (#2), 5 min 50 sec ago", "w-[257px]"],
  ["Last successful build (#2), 5 min 50 sec ago", "w-[284px]"],
  ["Last completed build (#2), 5 min 50 sec ago", "w-[286px]"],
];

function MainPanel() {
  return (
    <main className="flex grow flex-col pl-[15px] text-[#333]">
      <h1 className="mt-[20px] flex h-[44px] text-[32px] leading-[44px] font-bold">
        <Fit className="w-[510px]">Pipeline vineethkarthick-pipeline</Fit>
      </h1>
      <div className="mt-[4px] mr-[15px] flex h-[22px] items-center justify-end text-[14px] font-bold text-[#0b6aa2]">
        <SmallNotepad />
        <Fit className="ml-[2px] w-[104px]">add description</Fit>
      </div>
      <div className="mt-[6px] mr-[19px] flex h-[32px] w-[123px] items-center justify-center self-end rounded bg-[#0b6aa2] text-[12px] font-bold text-white">
        <Fit className="mt-px w-[88px]">Disable Project</Fit>
      </div>
      <div className="mt-[17px] ml-[19px] flex h-[46px] items-center text-[14px] font-bold text-[#0b6aa2]">
        <Notepad className="mb-px h-[45px] w-[45px]" />
        <Fit className="mt-[2px] ml-[5px] w-[107px]">Recent Changes</Fit>
      </div>
      <h2 className="mt-[26px] flex h-[40px] text-[27px] leading-[40px] font-bold">
        <Fit className="w-[150px]">Stage View</Fit>
      </h2>
      <div className="mt-[4px]">
        <StageView />
      </div>
      <h2 className="mt-[27px] flex h-[40px] text-[27px] leading-[40px] font-bold">
        <Fit className="w-[148px]">Permalinks</Fit>
      </h2>
      <ul className="mt-[10px] ml-[28px] text-[14px] leading-[21px] font-bold text-[#0b6aa2]">
        {links.map(([text, w]) => (
          <li key={text} className="flex h-[21px] items-center">
            <span className="mr-[7px] h-[5px] w-[5px] rounded-full bg-[#333]" />
            <Fit className={w}>{text}</Fit>
          </li>
        ))}
      </ul>
    </main>
  );
}

export default function App() {
  return (
    <div className="flex h-[1080px] w-[1920px] flex-col overflow-hidden bg-white font-['Noto_Sans','Open_Sans',sans-serif]">
      <TopBar />
      <div className="flex min-h-0 grow">
        <Dock />
        <div className="flex w-[1848px] flex-col">
          <TabStrip />
          <NavBar />
          <JenkinsHeader />
          <Breadcrumbs />
          <div className="flex min-h-0 grow">
            <SidePanel />
            <MainPanel />
          </div>
          <footer className="flex h-[57px] shrink-0 items-center justify-end border-t border-[#ebedee] bg-[#f8f8f8] pt-px pr-[20px] text-[14px] font-semibold text-[#333]">
            <Fit className="w-[61px]">REST API</Fit>
            <Fit className="ml-[41px] w-[101px]">Jenkins 2.303.3</Fit>
          </footer>
        </div>
      </div>
    </div>
  );
}
